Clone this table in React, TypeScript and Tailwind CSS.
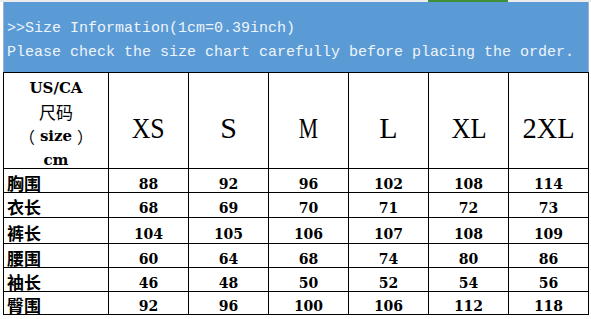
import React from "react";

const sizes = [
  { label: "XS", cls: "scale-x-[0.86]" },
  { label: "S", cls: "scale-x-100" },
  { label: "M", cls: "scale-x-[0.72]" },
  { label: "L", cls: "scale-x-100" },
  { label: "XL", cls: "scale-x-[0.88]" },
  { label: "2XL", cls: "scale-x-[0.95]" },
];

const rows: { label: string; values: number[] }[] = [
  { label: "胸围", values: [88, 92, 96, 102, 108, 114] },
  { label: "衣长", values: [68, 69, 70, 71, 72, 73] },
  { label: "裤长", values: [104, 105, 106, 107, 108, 109] },
  { label: "腰围", values: [60, 64, 68, 74, 80, 86] },
  { label: "袖长", values: [46, 48, 50, 52, 54, 56] },
  { label: "臀围", values: [92, 96, 100, 106, 112, 118] },
];

const latinBold = "font-['DejaVu_Serif',serif] font-bold";
const cjk = "font-['Noto_Sans_CJK_SC',sans-serif]";

export default function App() {
  return (
    <div className="w-[591px] h-[319px] bg-white overflow-hidden">
      {/* top strip */}
      <div className="h-[2px] bg-[#ececec] flex">
        <div className="w-[428px]" />
        <div className="w-[80px] bg-[#3f8f3a]" />
      </div>
      {/* blue info block */}
      <div className="ml-[3px] w-[586px] h-[70px] bg-[#5b9bd5] border-l border-r border-[#9fb4c8] pt-[15px] pl-[3px] font-['Liberation_Mono',monospace] text-[15px] leading-[24px] text-[#eef4fb] whitespace-nowrap">
        <div>&gt;&gt;Size Information(1cm=0.39inch)</div>
        <div>Please check the size chart carefully before placing the order.</div>
      </div>
      {/* table */}
      <div className="ml-[3px] w-[586px] grid grid-cols-[104px_repeat(6,79px)] grid-rows-[95px_23px_24px_25px_23px_23px_22px] gap-px p-px bg-black">
        <div className="bg-white flex flex-col items-center justify-center pt-[7px] leading-[24px] text-black">
          <div className={`${latinBold} text-[15px]`}>US/CA</div>
          <div className={`${cjk} text-[17px]`}>尺码</div>
          <div className={`flex items-center gap-[5px] ${cjk} text-[16px]`}>
            <span>（</span>
            <span className={`${latinBold} text-[15px]`}>size</span>
            <span>）</span>
          </div>
          <div className={`${latinBold} text-[15px]`}>cm</div>
        </div>
        {sizes.map((s) => (
          <div key={s.label} className="bg-white flex items-center justify-center pt-[14px]">
            <span className={`inline-block font-['Liberation_Serif',serif] text-[30px] leading-none text-black ${s.cls}`}>
              {s.label}
            </span>
          </div>
        ))}
        {rows.map((r) => (
          <React.Fragment key={r.label}>
            <div className={`bg-white flex items-center pl-[3px] pt-[3px] ${cjk} font-bold text-[17px] leading-none text-black`}>
              {r.label}
            </div>
            {r.values.map((v, i) => (
              <div key={i} className={`bg-white flex items-center justify-center pt-[6px] ${latinBold} text-[14px] leading-none text-black`}>
                {v}
              </div>
            ))}
          </React.Fragment>
        ))}
      </div>
    </div>
  );
}
